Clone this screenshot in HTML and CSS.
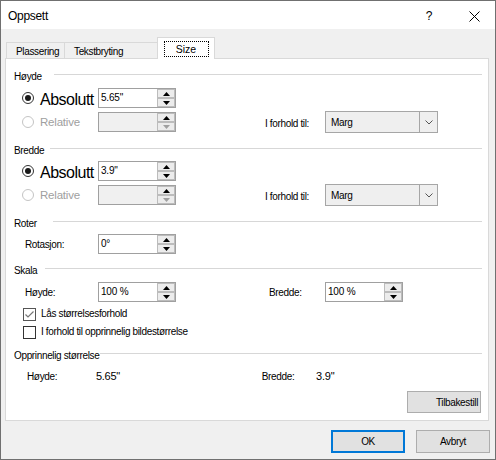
FILE: index.html
```html
<!DOCTYPE html>
<html>
  <head>
    <meta charset="utf-8" />
    <title>Oppsett</title>
    <link rel="stylesheet" href="styles.css">
  </head>
  <body>
    <div class="window">
      <div class="titlebar">
        <div class="title">Oppsett</div>
        <div class="title-help">?</div>
        <div class="title-close">
          <svg width="11" height="11" viewBox="0 0 11 11"><path d="M0.5 0.5 L10.5 10.5 M10.5 0.5 L0.5 10.5" stroke="#000" stroke-width="1" fill="none"/></svg>
        </div>
      </div>

      <div class="client">
        <div class="tab-strip">
          <div class="tab tab-first">Plassering</div>
          <div class="tab tab-second">Tekstbryting</div>
          <div class="tab tab-active"><span class="focus-ring">Size</span></div>
        </div>

        <div class="tab-panel">
          <!-- Høyde -->
          <div class="group-head"><span class="head-text w-40">Høyde</span><span class="rule"></span></div>
          <div class="row row-20">
            <div class="choice"><span class="radio on"></span><span class="choice-text">Absolutt</span></div>
            <div class="spin">
              <div class="spin-field">5.65"</div>
              <div class="spin-btns">
                <span class="spin-btn"><svg width="7" height="4" viewBox="0 0 7 4"><path d="M0 4 L3.5 0 L7 4 Z"/></svg></span>
                <span class="spin-btn"><svg width="7" height="4" viewBox="0 0 7 4"><path d="M0 0 L3.5 4 L7 0 Z"/></svg></span>
              </div>
            </div>
          </div>
          <div class="row row-22">
            <div class="choice is-disabled"><span class="radio"></span><span class="choice-text small">Relative</span></div>
            <div class="spin is-disabled">
              <div class="spin-field"></div>
              <div class="spin-btns">
                <span class="spin-btn"><svg width="7" height="4" viewBox="0 0 7 4"><path d="M0 4 L3.5 0 L7 4 Z"/></svg></span>
                <span class="spin-btn"><svg width="7" height="4" viewBox="0 0 7 4"><path d="M0 0 L3.5 4 L7 0 Z"/></svg></span>
              </div>
            </div>
            <div class="ref-label">I forhold til:</div>
            <div class="combo">
              <div class="combo-field">Marg</div>
              <div class="combo-btn"><svg width="8" height="5" viewBox="0 0 8 5"><path d="M0.5 0.5 L4 4 L7.5 0.5" stroke="#555" fill="none"/></svg></div>
            </div>
          </div>

          <!-- Bredde -->
          <div class="group-head"><span class="head-text w-36">Bredde</span><span class="rule"></span></div>
          <div class="row row-20">
            <div class="choice"><span class="radio on"></span><span class="choice-text">Absolutt</span></div>
            <div class="spin">
              <div class="spin-field">3.9"</div>
              <div class="spin-btns">
                <span class="spin-btn"><svg width="7" height="4" viewBox="0 0 7 4"><path d="M0 4 L3.5 0 L7 4 Z"/></svg></span>
                <span class="spin-btn"><svg width="7" height="4" viewBox="0 0 7 4"><path d="M0 0 L3.5 4 L7 0 Z"/></svg></span>
              </div>
            </div>
          </div>
          <div class="row row-22">
            <div class="choice is-disabled"><span class="radio"></span><span class="choice-text small">Relative</span></div>
            <div class="spin is-disabled">
              <div class="spin-field"></div>
              <div class="spin-btns">
                <span class="spin-btn"><svg width="7" height="4" viewBox="0 0 7 4"><path d="M0 4 L3.5 0 L7 4 Z"/></svg></span>
                <span class="spin-btn"><svg width="7" height="4" viewBox="0 0 7 4"><path d="M0 0 L3.5 4 L7 0 Z"/></svg></span>
              </div>
            </div>
            <div class="ref-label">I forhold til:</div>
            <div class="combo">
              <div class="combo-field">Marg</div>
              <div class="combo-btn"><svg width="8" height="5" viewBox="0 0 8 5"><path d="M0.5 0.5 L4 4 L7.5 0.5" stroke="#555" fill="none"/></svg></div>
            </div>
          </div>

          <!-- Roter -->
          <div class="group-head"><span class="head-text w-39">Roter</span><span class="rule"></span></div>
          <div class="row row-20">
            <div class="field-label">Rotasjon:</div>
            <div class="spin">
              <div class="spin-field">0°</div>
              <div class="spin-btns">
                <span class="spin-btn"><svg width="7" height="4" viewBox="0 0 7 4"><path d="M0 4 L3.5 0 L7 4 Z"/></svg></span>
                <span class="spin-btn"><svg width="7" height="4" viewBox="0 0 7 4"><path d="M0 0 L3.5 4 L7 0 Z"/></svg></span>
              </div>
            </div>
          </div>

          <!-- Skala -->
          <div class="group-head skala-head"><span class="head-text w-31">Skala</span><span class="rule"></span></div>
          <div class="row row-20">
            <div class="field-label">Høyde:</div>
            <div class="spin">
              <div class="spin-field">100 %</div>
              <div class="spin-btns">
                <span class="spin-btn"><svg width="7" height="4" viewBox="0 0 7 4"><path d="M0 4 L3.5 0 L7 4 Z"/></svg></span>
                <span class="spin-btn"><svg width="7" height="4" viewBox="0 0 7 4"><path d="M0 0 L3.5 4 L7 0 Z"/></svg></span>
              </div>
            </div>
            <div class="mid-label">Bredde:</div>
            <div class="spin">
              <div class="spin-field">100 %</div>
              <div class="spin-btns">
                <span class="spin-btn"><svg width="7" height="4" viewBox="0 0 7 4"><path d="M0 4 L3.5 0 L7 4 Z"/></svg></span>
                <span class="spin-btn"><svg width="7" height="4" viewBox="0 0 7 4"><path d="M0 0 L3.5 4 L7 0 Z"/></svg></span>
              </div>
            </div>
          </div>
          <div class="check-row first">
            <span class="check on"><svg width="11" height="11" viewBox="0 0 11 11"><path d="M1.5 5.5 L4 8 L9.5 2.5" stroke="#777" stroke-width="1.2" fill="none"/></svg></span>
            <span>Lås størrelsesforhold</span>
          </div>
          <div class="check-row">
            <span class="check"></span>
            <span>I forhold til opprinnelig bildestørrelse</span>
          </div>

          <!-- Opprinnelig størrelse -->
          <div class="group-head"><span class="head-text w-86">Opprinnelig størrelse</span><span class="rule"></span></div>
          <div class="value-row">
            <div class="value-label">Høyde:</div>
            <div class="value">5.65"</div>
            <div class="value-label second">Bredde:</div>
            <div class="value">3.9"</div>
          </div>
          <div class="reset-row">
            <button class="btn btn-reset">Tilbakestill</button>
          </div>
        </div>

        <div class="actions">
          <button class="btn btn-default">OK</button>
          <button class="btn">Avbryt</button>
        </div>
      </div>
    </div>
  </body>
</html>
```

FILE: styles.css
```css
* {
  box-sizing: border-box;
}

body {
  margin: 0;
  font-family: "Liberation Sans", Arial, sans-serif;
  font-size: 10px;
  letter-spacing: -0.35px;
  color: #000;
}

.window {
  width: 496px;
  height: 460px;
  border: 1px solid #707070;
  background: #f0f0f0;
  display: flex;
  flex-direction: column;
}

/* title bar */
.titlebar {
  height: 28px;
  background: #fff;
  display: flex;
  align-items: center;
  padding-top: 2px;
}

.title {
  padding-left: 7px;
  font-size: 12px;
  letter-spacing: -0.3px;
}

.title-help {
  margin-left: auto;
  width: 30px;
  text-align: center;
  font-size: 12px;
}

.title-close {
  width: 42px;
  margin-left: 9px;
  display: flex;
  justify-content: center;
  padding-top: 1px;
}

/* tabs */
.client {
  flex: 1;
  display: flex;
  flex-direction: column;
}

.tab-strip {
  height: 30px;
  padding-left: 5px;
  display: flex;
  align-items: flex-end;
  position: relative;
  z-index: 1;
}

.tab {
  height: 16px;
  margin-bottom: 1px;
  border: 1px solid #d9d9d9;
  border-bottom: none;
  background: #f0f0f0;
  line-height: 12px;
  padding-top: 3px;
}

.tab-first {
  width: 59px;
  padding-left: 9px;
}

.tab-second {
  width: 92px;
  padding-left: 9px;
  border-left: none;
  border-right: none;
}

.tab-active {
  width: 58px;
  height: 22px;
  margin-bottom: 0;
  background: #fff;
  display: flex;
  justify-content: center;
  align-items: flex-start;
  padding-top: 3px;
}

.focus-ring {
  width: 45px;
  height: 16px;
  border: 1px dotted #000;
  text-align: center;
  line-height: 14px;
  font-size: 10.5px;
  letter-spacing: 0;
}

.tab-panel {
  margin-top: -1px;
  margin-left: 4px;
  width: 484px;
  border: 1px solid #d9d9d9;
  background: #fff;
  padding: 8px 6px 7px 0;
}

/* group headings with a rule */
.group-head {
  height: 15px;
  display: flex;
  align-items: flex-start;
  padding-left: 8px;
}

.head-text {
  flex-shrink: 0;
  line-height: 11px;
  margin-top: 4px;
  white-space: nowrap;
}

.w-31 { width: 31px; }
.w-36 { width: 36px; }
.w-39 { width: 39px; }
.w-40 { width: 40px; }
.w-86 { width: 86px; }

.rule {
  flex: 1;
  height: 1px;
  margin-top: 7px;
  background: #d7d7d7;
}

.row {
  display: flex;
  align-items: center;
}

.row-20 {
  height: 20px;
}

.row-22 {
  height: 22px;
}

.row + .row {
  margin-top: 3px;
}

.group-head + .row {
  margin-top: 5px;
}

.tab-panel > .group-head:first-child + .row,
.skala-head + .row {
  margin-top: 6px;
}

.row + .group-head {
  margin-top: 8px;
}

.group-head.skala-head {
  margin-top: 7px;
}

/* radio choices */
.choice {
  width: 76px;
  margin-left: 16px;
  align-self: stretch;
  display: flex;
}

.radio {
  width: 12px;
  height: 12px;
  border: 1px solid #333;
  border-radius: 50%;
  background: #fff;
  align-self: center;
  margin-right: 6px;
  display: flex;
  align-items: center;
  justify-content: center;
}

.radio.on::after {
  content: "";
  width: 6px;
  height: 6px;
  border-radius: 50%;
  background: #1a1a1a;
}

.choice-text {
  align-self: flex-end;
  font-size: 16px;
  letter-spacing: -0.5px;
  line-height: 16px;
}

.choice-text.small {
  align-self: center;
  font-size: 11.5px;
  letter-spacing: -0.2px;
  line-height: 13px;
  padding-top: 1px;
}

.choice.is-disabled {
  color: #a0a0a0;
}

.choice.is-disabled .radio {
  border-color: #c4c4c4;
}

/* spin boxes */
.spin {
  width: 78px;
  height: 20px;
  border: 1px solid #a0a0a0;
  background: #fff;
  display: flex;
}

.spin-field {
  flex: 1;
  padding-left: 2px;
  line-height: 18px;
  letter-spacing: -0.2px;
}

.spin-btns {
  width: 18px;
  display: flex;
  flex-direction: column;
}

.spin-btn {
  height: 9px;
  border: 1px solid #bcbcbc;
  background: #ececec;
  display: flex;
  align-items: center;
  justify-content: center;
}

.spin-btn svg {
  fill: #000;
}

.spin.is-disabled .spin-field {
  background: #f0f0f0;
}

.spin.is-disabled .spin-btn + .spin-btn svg {
  fill: #a0a0a0;
}

/* labels in rows */
.ref-label {
  width: 149px;
  padding-left: 89px;
  padding-top: 2px;
  white-space: nowrap;
}

.field-label {
  width: 73px;
  margin-left: 19px;
}

.mid-label {
  width: 149px;
  padding-left: 93px;
}

/* drop-down */
.combo {
  width: 113px;
  height: 22px;
  border: 1px solid #a6a6a6;
  background: #efefef;
  display: flex;
}

.combo-field {
  flex: 1;
  padding-left: 5px;
  line-height: 20px;
  padding-top: 1px;
}

.combo-btn {
  width: 18px;
  border-left: 1px solid #a6a6a6;
  display: flex;
  align-items: center;
  justify-content: center;
}

/* check boxes */
.check-row {
  height: 14px;
  margin-top: 4px;
  padding-left: 17px;
  display: flex;
  align-items: center;
  line-height: 14px;
}

.check-row.first {
  margin-top: 5px;
}

.check {
  width: 13px;
  height: 13px;
  border: 1px solid #333;
  background: #fff;
  margin-right: 5px;
  display: flex;
  align-items: center;
  justify-content: center;
}

.check.on {
  border-color: #555;
}

.check-row + .group-head {
  margin-top: 7px;
}

/* original size values */
.value-row {
  height: 14px;
  margin-top: 8px;
  display: flex;
  align-items: baseline;
  line-height: 14px;
}

.value-label {
  width: 71px;
  margin-left: 21px;
}

.value-label.second {
  width: 56px;
  margin-left: 0;
}

.value {
  width: 171px;
  font-size: 11px;
  letter-spacing: -0.25px;
}

.reset-row {
  margin-top: 8px;
  display: flex;
  justify-content: flex-end;
  padding-right: 1px;
}

/* buttons */
.btn {
  height: 22px;
  width: 74px;
  border: 1px solid #adadad;
  background: #e1e1e1;
  font-family: inherit;
  font-size: 10px;
  letter-spacing: -0.35px;
  color: #000;
  padding: 0;
}

.btn-reset {
  text-align: right;
  padding-right: 2px;
}

.actions {
  margin-top: 9px;
  display: flex;
  justify-content: flex-end;
  gap: 11px;
  padding-right: 5px;
}

.actions .btn {
  height: 23px;
}

.btn-default {
  border: 2px solid #0078d7;
}
```
